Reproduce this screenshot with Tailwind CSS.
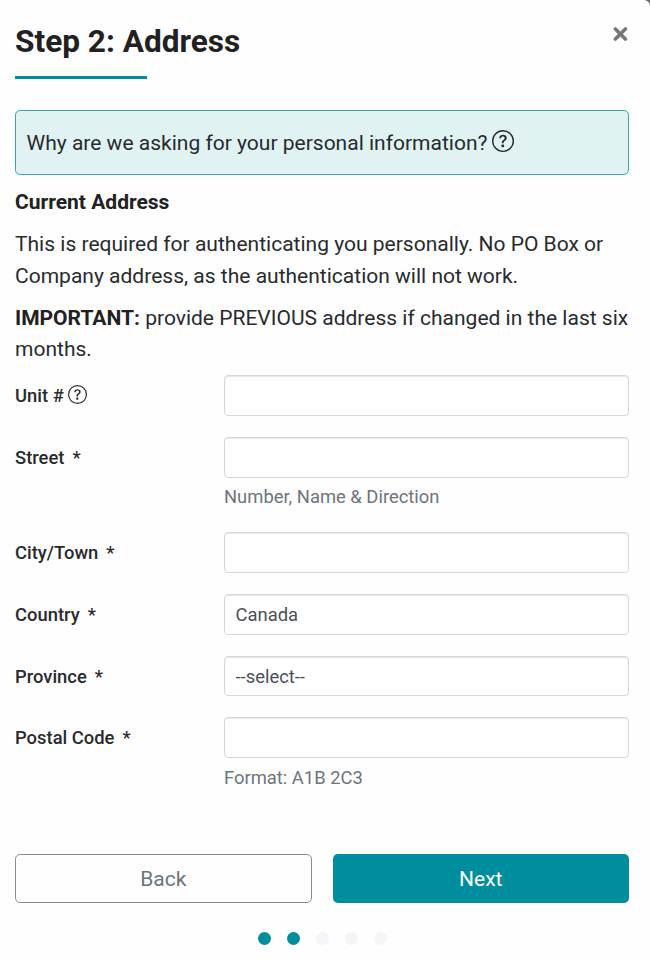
<!DOCTYPE html>
<html lang="en">
<head>
    <meta charset="utf-8">
    <meta name="viewport" content="width=device-width, initial-scale=1.0">
    <title>Step 2: Address</title>
    <script src="https://cdn.jsdelivr.net/npm/@tailwindcss/browser@4"></script>
</head>
<body class="bg-[#666] font-[Roboto,sans-serif] text-[21.03px] leading-[31.5px] text-[#282b2d]">
    <div class="h-[961px] w-[650px] overflow-hidden rounded-tr-[6px] bg-[#fefefe] pl-[15px] pr-[21px]">
        <!-- Header -->
        <header class="flex h-[110px] items-start justify-between pt-[23px]">
            <div>
                <h1 class="text-[31.6px] font-bold leading-[38px] text-[#212121]">Step 2: Address</h1>
                <div class="mt-[15px] h-[3px] w-[131.5px] bg-[#008e9f]"></div>
            </div>
            <button class="mt-[4px] mr-[1px]" aria-label="Close">
                <svg class="h-[14px] w-[15px]" viewBox="0 0 15 14" fill="none" stroke="#777" stroke-width="3.6" stroke-linecap="round">
                    <path d="M2.4 2 12.4 12M12.4 2 2.4 12" />
                </svg>
            </button>
        </header>

        <div class="flex h-[65px] items-center rounded-[5px] border border-[#37a7ae] bg-[#e0f2f1] px-[10.5px]">
            <span>Why are we asking for your personal information?</span>
            <svg class="-mt-[4px] ml-[5px] h-[22px] w-[22px]" viewBox="0 0 16 16" fill="currentColor">
                <path d="M8 15A7 7 0 1 1 8 1a7 7 0 0 1 0 14m0 1A8 8 0 1 0 8 0a8 8 0 0 0 0 16" />
                <path d="M5.255 5.786a.237.237 0 0 0 .241.247h.825c.138 0 .248-.113.266-.25.09-.656.54-1.134 1.342-1.134.686 0 1.314.343 1.314 1.168 0 .635-.374.927-.965 1.371-.673.489-1.206 1.06-1.168 1.987l.003.217a.25.25 0 0 0 .25.246h.811a.25.25 0 0 0 .25-.25v-.105c0-.718.273-.927 1.01-1.486.609-.463 1.244-.977 1.244-2.056 0-1.511-1.276-2.241-2.673-2.241-1.267 0-2.655.59-2.75 2.286m1.557 5.763c0 .533.425.927 1.01.927.609 0 1.028-.394 1.028-.927 0-.552-.42-.94-1.029-.94-.584 0-1.009.388-1.009.94" />
            </svg>
        </div>

        <h2 class="mt-[11px] font-bold text-[#212121]">Current Address</h2>
        <p class="mt-[10.5px]">This is required for authenticating you personally. No PO Box or<br>Company address, as the authentication will not work.</p>
        <p class="mt-[10.5px] whitespace-nowrap"><b class="text-[#212121]">IMPORTANT:</b> provide PREVIOUS address if changed in the last six<br>months.</p>

        <!-- Address form -->
        <form class="mt-[10.5px] text-[18.4px] leading-[27px]">
            <div class="flex h-[62px]">
                <label for="unit" class="flex h-[41px] w-[209px] items-center font-medium">Unit #
                    <svg class="-mt-[3px] ml-[4px] h-[19px] w-[19px]" viewBox="0 0 16 16" fill="currentColor">
                        <path d="M8 15A7 7 0 1 1 8 1a7 7 0 0 1 0 14m0 1A8 8 0 1 0 8 0a8 8 0 0 0 0 16" />
                        <path d="M5.255 5.786a.237.237 0 0 0 .241.247h.825c.138 0 .248-.113.266-.25.09-.656.54-1.134 1.342-1.134.686 0 1.314.343 1.314 1.168 0 .635-.374.927-.965 1.371-.673.489-1.206 1.06-1.168 1.987l.003.217a.25.25 0 0 0 .25.246h.811a.25.25 0 0 0 .25-.25v-.105c0-.718.273-.927 1.01-1.486.609-.463 1.244-.977 1.244-2.056 0-1.511-1.276-2.241-2.673-2.241-1.267 0-2.655.59-2.75 2.286m1.557 5.763c0 .533.425.927 1.01.927.609 0 1.028-.394 1.028-.927 0-.552-.42-.94-1.029-.94-.584 0-1.009.388-1.009.94" />
                    </svg>
                </label>
                <input id="unit" type="text" class="h-[41px] flex-1 rounded-[4px] border border-[#d5d8db] bg-white px-[11px] shadow-[inset_0_1px_1px_rgba(0,0,0,0.1)]">
            </div>
            <div class="flex h-[95px]">
                <label for="street" class="flex h-[41px] w-[209px] items-center gap-[8px] font-medium">Street <span>*</span></label>
                <div class="flex-1">
                    <input id="street" type="text" class="block h-[41px] w-full rounded-[4px] border border-[#d5d8db] bg-white px-[11px] shadow-[inset_0_1px_1px_rgba(0,0,0,0.1)]">
                    <small class="mt-[5px] block text-[18.4px] text-[#6c757d]">Number, Name &amp; Direction</small>
                </div>
            </div>
            <div class="flex h-[62px]">
                <label for="city" class="flex h-[41px] w-[209px] items-center gap-[8px] font-medium">City/Town <span>*</span></label>
                <input id="city" type="text" class="h-[41px] flex-1 rounded-[4px] border border-[#d5d8db] bg-white px-[11px] shadow-[inset_0_1px_1px_rgba(0,0,0,0.1)]">
            </div>
            <div class="flex h-[62px]">
                <label for="country" class="flex h-[41px] w-[209px] items-center gap-[8px] font-medium">Country <span>*</span></label>
                <select id="country" class="h-[41px] flex-1 appearance-none rounded-[4px] border border-[#d5d8db] bg-white px-[10.5px] text-[#495057] shadow-[inset_0_1px_1px_rgba(0,0,0,0.1)]">
                    <option>Canada</option>
                </select>
            </div>
            <div class="flex h-[61px]">
                <label for="province" class="flex h-[40px] w-[209px] items-center gap-[8px] font-medium">Province <span>*</span></label>
                <select id="province" class="h-[40px] flex-1 appearance-none rounded-[4px] border border-[#d5d8db] bg-white px-[10.5px] text-[#495057] shadow-[inset_0_1px_1px_rgba(0,0,0,0.1)]">
                    <option>--select--</option>
                </select>
            </div>
            <div class="flex h-[137px]">
                <label for="postal" class="flex h-[41px] w-[209px] items-center gap-[8px] font-medium">Postal Code <span>*</span></label>
                <div class="flex-1">
                    <input id="postal" type="text" class="block h-[41px] w-full rounded-[4px] border border-[#d5d8db] bg-white px-[11px] shadow-[inset_0_1px_1px_rgba(0,0,0,0.1)]">
                    <small class="mt-[6px] block text-[18.4px] text-[#6c757d]">Format: A1B 2C3</small>
                </div>
            </div>
        </form>

        <div class="grid grid-cols-2 gap-[21px]">
            <button class="h-[49px] rounded-[5px] border border-[#8a8d90] text-[#6c757d]">Back</button>
            <button class="h-[49px] rounded-[5px] bg-[#008e9f] text-white">Next</button>
        </div>

        <!-- Step dots -->
        <div class="mt-[29px] flex justify-center gap-4">
            <span class="h-[13px] w-[13px] rounded-full bg-[#008e9f]"></span>
            <span class="h-[13px] w-[13px] rounded-full bg-[#008e9f]"></span>
            <span class="h-[13px] w-[13px] rounded-full bg-[#f4f4f9]"></span>
            <span class="h-[13px] w-[13px] rounded-full bg-[#f4f4f9]"></span>
            <span class="h-[13px] w-[13px] rounded-full bg-[#f4f4f9]"></span>
        </div>
    </div>
</body>
</html>
